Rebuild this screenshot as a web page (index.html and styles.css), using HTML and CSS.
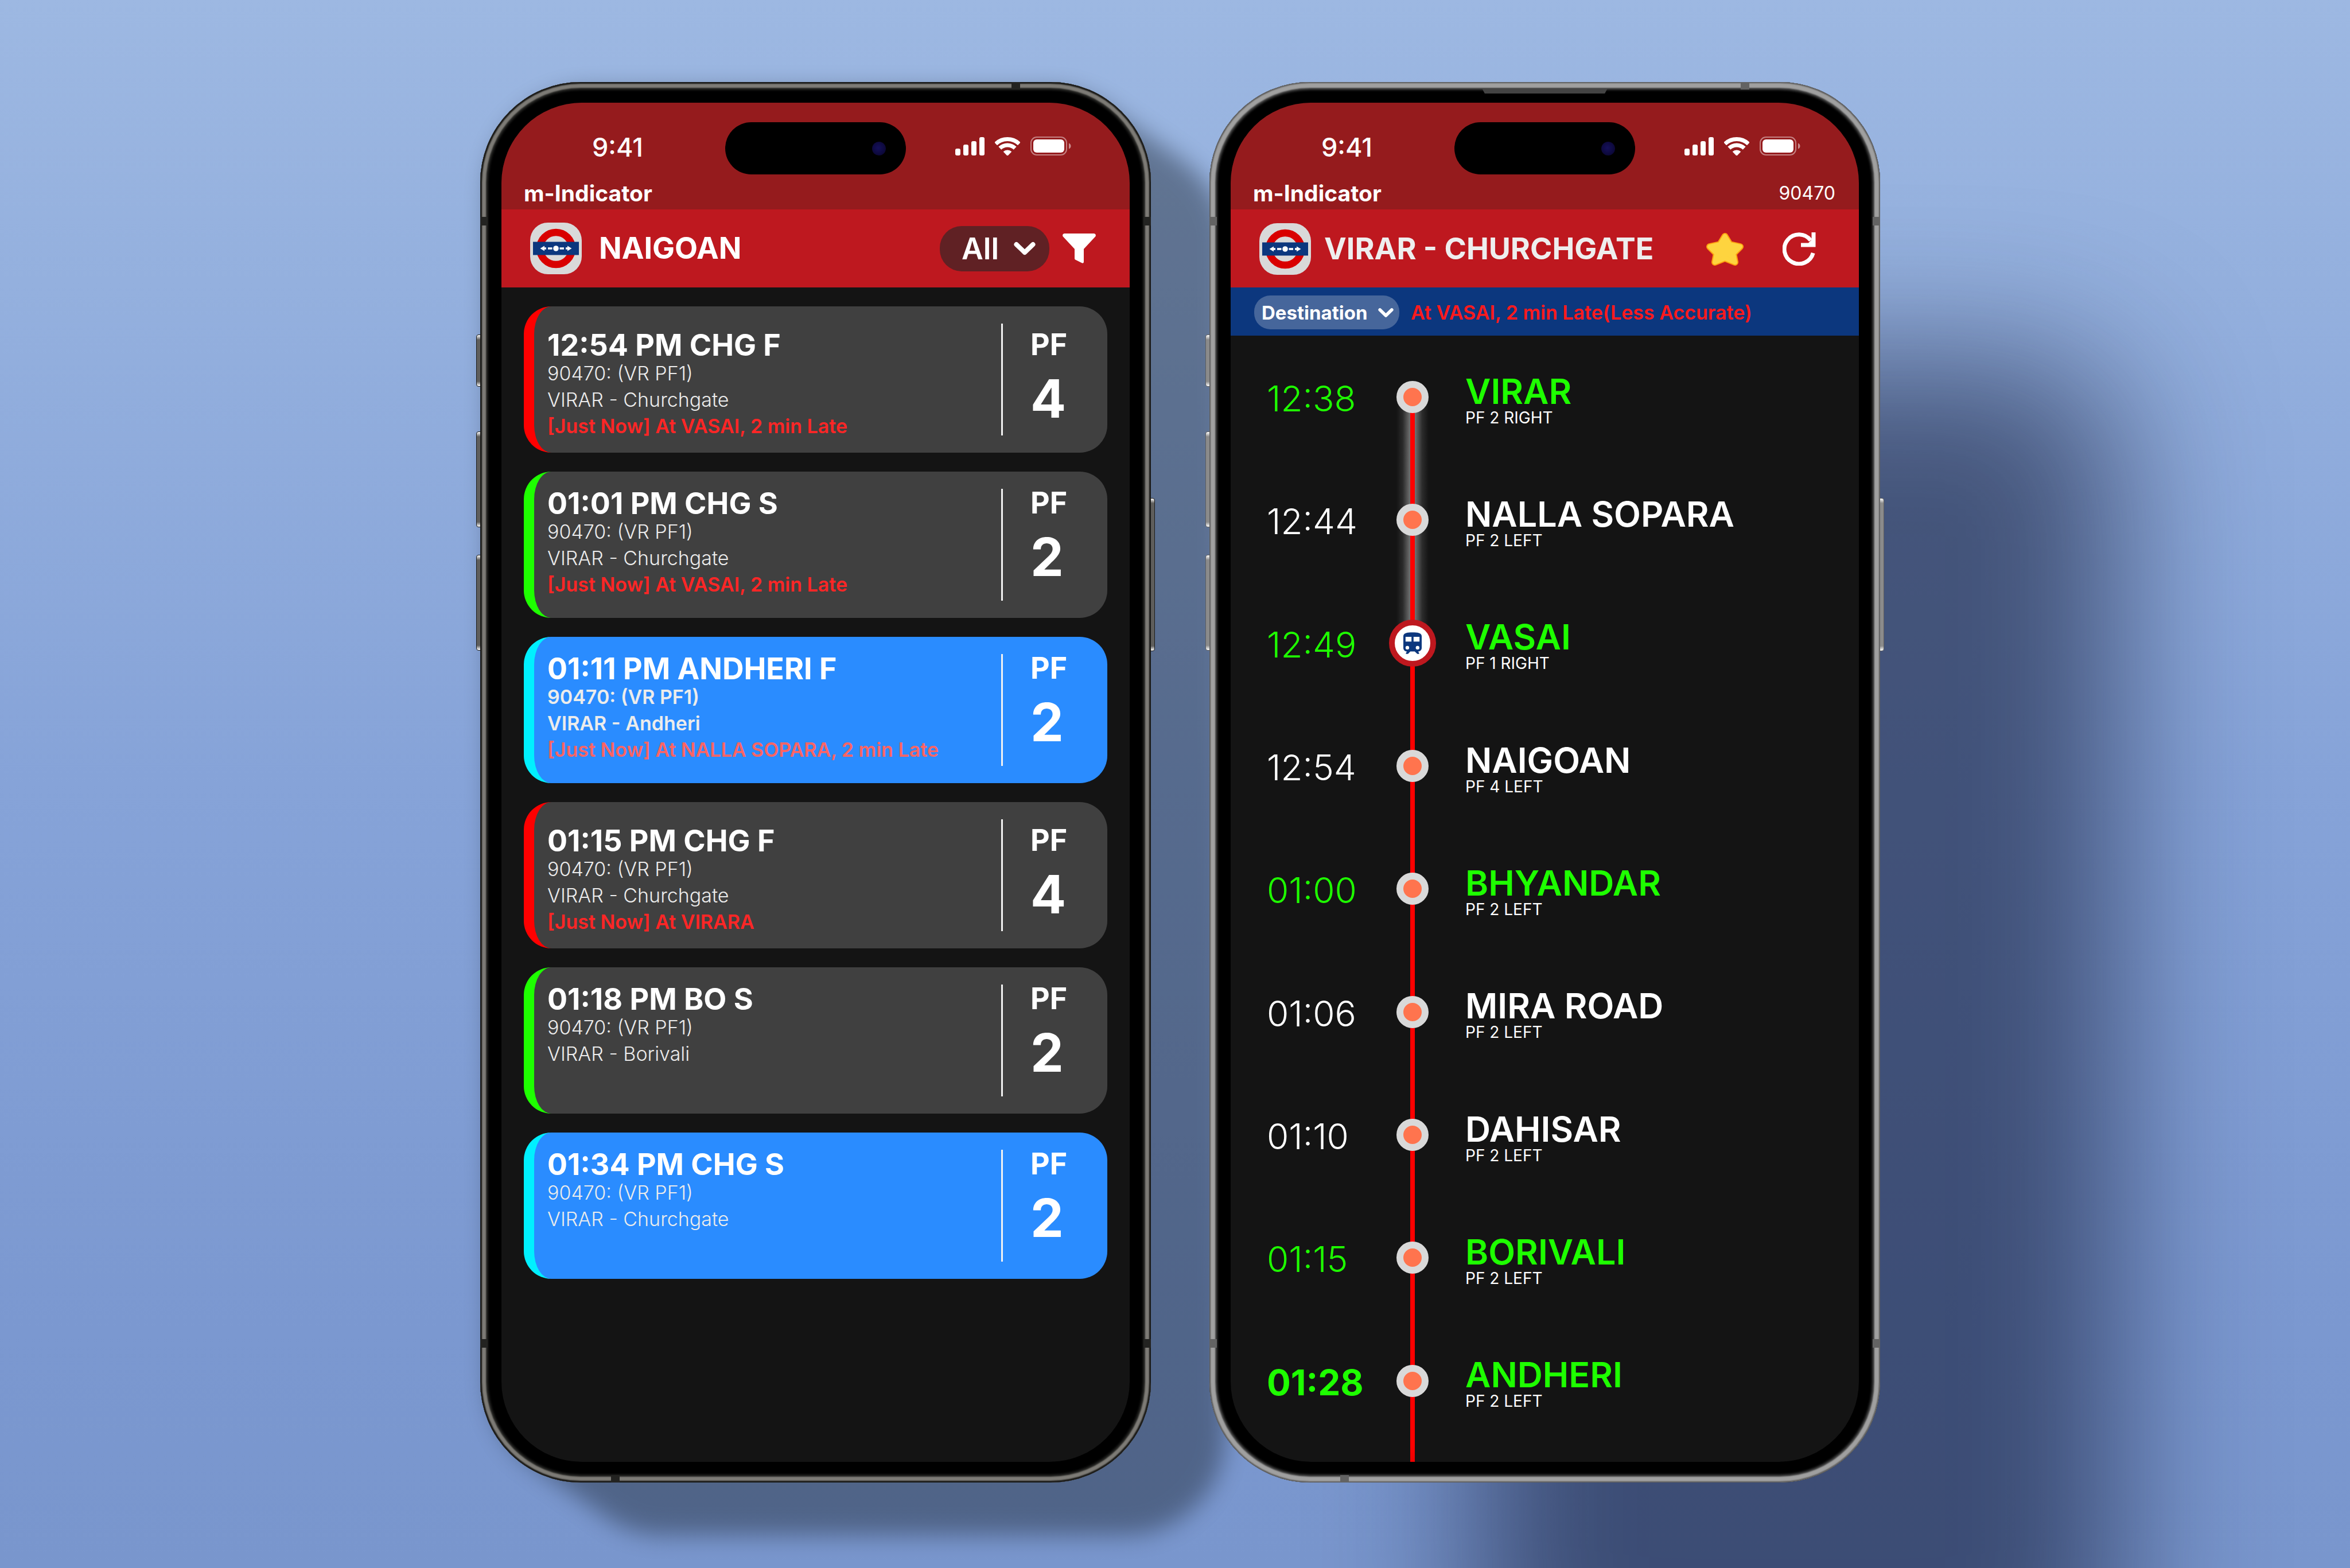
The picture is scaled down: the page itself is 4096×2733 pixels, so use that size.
FILE: index.html
```html
<!DOCTYPE html>
<html lang="en">
<head>
<meta charset="utf-8">
<title>m-Indicator</title>
<link rel="stylesheet" href="styles.css">
</head>
<body>
<svg class="sprite" aria-hidden="true">
  <symbol id="signal" viewBox="0 0 51 32">
    <rect x="0" y="20" width="9" height="12" rx="3"/><rect x="14" y="13" width="9" height="19" rx="3"/><rect x="28" y="7" width="9" height="25" rx="3"/><rect x="42" y="0" width="9" height="32" rx="3"/>
  </symbol>
  <symbol id="wifi" viewBox="0 0 44 32">
    <clipPath id="wedge"><path d="M22 33 -2 8V-4H46V8z"/></clipPath>
    <g clip-path="url(#wedge)"><circle cx="22" cy="33" r="10.5"/><circle cx="22" cy="33" r="19" fill="none" stroke="currentColor" stroke-width="7"/><circle cx="22" cy="33" r="29.5" fill="none" stroke="currentColor" stroke-width="7"/></g>
  </symbol>
  <symbol id="battery" viewBox="0 0 71 33">
    <rect x="1" y="1" width="62" height="31" rx="10" fill="none" stroke="currentColor" stroke-width="2" opacity=".45"/>
    <rect x="5" y="5" width="54" height="23" rx="6"/><path d="M67 11.500q3.500 1.500 3.500 5t-3.500 5z" opacity=".5"/>
  </symbol>
  <symbol id="logo" viewBox="0 0 90 90">
    <rect width="90" height="90" rx="31" fill="#d9d9d9"/>
    <circle cx="45" cy="45" r="28" fill="none" stroke="#d90000" stroke-width="12.500"/>
    <rect x="5" y="33.500" width="80" height="23" fill="#0c377e"/>
    <g fill="#fff"><circle cx="45" cy="45" r="4.800"/><path d="M17.500 45l7.500-4.500V43.300h3v3.400h-3v2.800zM72.500 45l-7.500-4.500V43.300h-3v3.400h3v2.800zM31 43.200h7.500v3.600H31zM51.500 43.200H59v3.600h-7.500z"/></g>
  </symbol>
  <symbol id="chevron" viewBox="0 0 38 24">
    <path d="M4.500 5 19 19 33.500 5" fill="none" stroke="currentColor" stroke-width="8" stroke-linecap="round" stroke-linejoin="round"/>
  </symbol>
  <symbol id="train" viewBox="184 187 142 166">
    <path fill="#0c377e" d="M184 217C184 191 215 187 255 187s71 4 71 30v88c0 17-12 29-28 29l8 12v7H292L272 334H238L220 353H204v-7l8-12c-16 0-28-12-28-29z"/>
    <path fill="#fff" d="M201 221h46v37h-46zM263 221h46v37h-46z"/><circle cx="215" cy="305" r="14" fill="#fff"/><circle cx="294" cy="305" r="14" fill="#fff"/>
  </symbol>
</svg>

<main class="showcase">
  <section class="device device--dark">
    <i class="key key--left key--action"></i><i class="key key--left key--up"></i><i class="key key--left key--down"></i><i class="key key--power"></i>
    <i class="band band--high"></i><i class="band band--low"></i><i class="band band--top"></i><i class="band band--bottom"></i>
    <div class="screen">
      <div class="status">
        <div class="status__row">
          <span class="status__time">9:41</span>
          <span class="island"><i class="island__lens"></i></span>
          <span class="status__icons"><svg width="51" height="32"><use href="#signal"/></svg><svg width="44" height="32"><use href="#wifi"/></svg><svg width="71" height="33"><use href="#battery"/></svg></span>
        </div>
        <div class="status__app"><strong>m-Indicator</strong></div>
      </div>
      <header class="header">
        <svg class="header__logo"><use href="#logo"/></svg>
        <h1 class="header__title">NAIGOAN</h1>
        <label class="picker picker--large"><select aria-label="Line"><option>All</option></select><svg><use href="#chevron"/></svg></label>
        <button class="icon-button" aria-label="Filter"><svg width="58" height="52" viewBox="0 0 58 52"><path fill="#fff" d="M3 0H55Q59 1 57.500 5L37 27V50Q36 53 33 51L22 45.500Q21 45 21 43V27L.5 5Q-1 1 3 0z"/></svg></button>
      </header>
      <ul class="trains">
        <li class="train train--fast">
          <div class="train__info"><h2>12:54 PM CHG F</h2><p>90470: (VR PF1)</p><p>VIRAR - Churchgate</p><p class="train__live">[Just Now] At VASAI, 2 min Late</p></div>
          <div class="train__platform"><span>PF</span><b>4</b></div>
        </li>
        <li class="train train--slow">
          <div class="train__info"><h2>01:01 PM CHG S</h2><p>90470: (VR PF1)</p><p>VIRAR - Churchgate</p><p class="train__live">[Just Now] At VASAI, 2 min Late</p></div>
          <div class="train__platform"><span>PF</span><b>2</b></div>
        </li>
        <li class="train train--ac train--strong">
          <div class="train__info"><h2>01:11 PM ANDHERI F</h2><p>90470: (VR PF1)</p><p>VIRAR - Andheri</p><p class="train__live">[Just Now] At NALLA SOPARA, 2 min Late</p></div>
          <div class="train__platform"><span>PF</span><b>2</b></div>
        </li>
        <li class="train train--fast">
          <div class="train__info"><h2>01:15 PM CHG F</h2><p>90470: (VR PF1)</p><p>VIRAR - Churchgate</p><p class="train__live">[Just Now] At VIRARA</p></div>
          <div class="train__platform"><span>PF</span><b>4</b></div>
        </li>
        <li class="train train--slow">
          <div class="train__info"><h2>01:18 PM BO S</h2><p>90470: (VR PF1)</p><p>VIRAR - Borivali</p></div>
          <div class="train__platform"><span>PF</span><b>2</b></div>
        </li>
        <li class="train train--ac">
          <div class="train__info"><h2>01:34 PM CHG S</h2><p>90470: (VR PF1)</p><p>VIRAR - Churchgate</p></div>
          <div class="train__platform"><span>PF</span><b>2</b></div>
        </li>
      </ul>
    </div>
  </section>

  <section class="device device--light">
    <i class="key key--left key--action"></i><i class="key key--left key--up"></i><i class="key key--left key--down"></i><i class="key key--power"></i>
    <i class="band band--high"></i><i class="band band--low"></i><i class="band band--top"></i><i class="band band--bottom"></i>
    <i class="earpiece"></i>
    <div class="screen">
      <div class="status">
        <div class="status__row">
          <span class="status__time">9:41</span>
          <span class="island"><i class="island__lens"></i></span>
          <span class="status__icons"><svg width="51" height="32"><use href="#signal"/></svg><svg width="44" height="32"><use href="#wifi"/></svg><svg width="71" height="33"><use href="#battery"/></svg></span>
        </div>
        <div class="status__app"><strong>m-Indicator</strong><span>90470</span></div>
      </div>
      <header class="header header--route">
        <svg class="header__logo"><use href="#logo"/></svg>
        <h1 class="header__title">VIRAR - CHURCHGATE</h1>
        <button class="icon-button" aria-label="Favourite"><svg width="65" height="57" viewBox="0 0 65 57"><g stroke-linejoin="round"><path fill="#ff9f0f" stroke="#ff9f0f" stroke-width="12" d="M32.500 6 41 20 59 24 47 36 50 51 32.500 44 15 51 18 36 6 24 24 20z"/><path fill="#fed43f" stroke="#fed43f" stroke-width="8" d="M32.500 6 41 20 59 24 47 36 50 51 32.500 44 15 51 18 36 6 24 24 20z"/></g></svg></button>
        <button class="icon-button" aria-label="Refresh"><svg width="58" height="58" viewBox="0 0 58 58"><path fill="none" stroke="#fff" stroke-width="7" d="M53.200 36A25.500 25.500 0 1 1 49 14"/><path fill="#fff" d="M50.500 0H57.500V25.500H32V18.500H45L50.500 13z"/></svg></button>
      </header>
      <div class="live">
        <label class="picker picker--small"><select aria-label="Stop"><option>Destination</option></select><svg><use href="#chevron"/></svg></label>
        <p class="live__text">At VASAI, 2 min Late(Less Accurate)</p>
      </div>
      <ol class="route">
        <li class="stop stop--green stop--start"><time class="stop__time">12:38</time><span class="stop__rail"><i class="stop__node"></i></span><div class="stop__place"><h2>VIRAR</h2><p>PF 2 RIGHT</p></div></li>
        <li class="stop stop--passed"><time class="stop__time">12:44</time><span class="stop__rail"><i class="stop__node"></i></span><div class="stop__place"><h2>NALLA SOPARA</h2><p>PF 2 LEFT</p></div></li>
        <li class="stop stop--green stop--here"><time class="stop__time">12:49</time><span class="stop__rail"><i class="stop__node stop__node--train"><svg width="32" height="38"><use href="#train"/></svg></i></span><div class="stop__place"><h2>VASAI</h2><p>PF 1 RIGHT</p></div></li>
        <li class="stop"><time class="stop__time">12:54</time><span class="stop__rail"><i class="stop__node"></i></span><div class="stop__place"><h2>NAIGOAN</h2><p>PF 4 LEFT</p></div></li>
        <li class="stop stop--green"><time class="stop__time">01:00</time><span class="stop__rail"><i class="stop__node"></i></span><div class="stop__place"><h2>BHYANDAR</h2><p>PF 2 LEFT</p></div></li>
        <li class="stop"><time class="stop__time">01:06</time><span class="stop__rail"><i class="stop__node"></i></span><div class="stop__place"><h2>MIRA ROAD</h2><p>PF 2 LEFT</p></div></li>
        <li class="stop"><time class="stop__time">01:10</time><span class="stop__rail"><i class="stop__node"></i></span><div class="stop__place"><h2>DAHISAR</h2><p>PF 2 LEFT</p></div></li>
        <li class="stop stop--green"><time class="stop__time">01:15</time><span class="stop__rail"><i class="stop__node"></i></span><div class="stop__place"><h2>BORIVALI</h2><p>PF 2 LEFT</p></div></li>
        <li class="stop stop--green stop--final"><time class="stop__time">01:28</time><span class="stop__rail"><i class="stop__node"></i></span><div class="stop__place"><h2>ANDHERI</h2><p>PF 2 LEFT</p></div></li>
      </ol>
    </div>
  </section>
</main>
</body>
</html>
```
FILE: styles.css
```css
* { box-sizing: border-box; }

body {
  margin: 0;
  font-family: Inter, "Liberation Sans", sans-serif;
  color: #fff;
}

h1, h2, p, ul, ol { margin: 0; padding: 0; list-style: none; }
h1, h2 { font-weight: 600; }
svg { display: block; flex: none; fill: currentColor; }
button, select { font: inherit; color: inherit; border: 0; background: none; padding: 0; margin: 0; }
.sprite { position: absolute; width: 0; height: 0; }

.showcase {
  display: grid;
  grid-template-columns: 1fr 1fr;
  gap: 102px;
  align-items: start;
  min-height: 100vh;
  padding: 143px 819px 0 837px;
  overflow: hidden;
  background: linear-gradient(#9db8e2, #94b0de 18%, #86a3d8 50%, #7b98d0 85%, #7996cd);
}

/* Phone body */
.device {
  position: relative;
  z-index: 1;
  min-width: 0;
  aspect-ratio: 1169 / 2441;
  padding: 36px 37px;
  border-radius: 175px;
  background: #000;
}
.device--dark {
  --band: #232321;
  --key: #5f5e5c;
  --edge: #1b1b19;
  z-index: 0;
}
.device--light {
  --band: #636363;
  --key: #8b8b8b;
  --edge: #5e5e5e;
  box-shadow: 440px 460px 310px -25px rgba(20, 28, 58, .6);
}
.device--dark::before {
  content: "";
  position: absolute;
  inset: 14px 0 0 14px;
  z-index: -2;
  border-radius: inherit;
  color: #1e2835;
  background: currentColor;
  box-shadow: 16px 11px, 32px 23px, 49px 34px, 65px 46px, 81px 57px, 98px 69px, 114px 80px, 130px 92px;
  filter: blur(20px);
  opacity: .45;
}
.device::after {
  content: "";
  position: absolute;
  inset: 0;
  z-index: -1;
  border-radius: inherit;
  background: #000;
}
.device--dark::after {
  box-shadow: inset 0 0 2px 3px #191917, inset 0 0 2px 10px #7d7b76, inset 0 0 4px 13px #32322f;
}
.device--light::after {
  box-shadow: inset 0 0 2px 2px #5c5c5c, inset 0 0 2px 10px #a0a0a0, inset 0 0 4px 13px #555;
}

.key {
  position: absolute;
  z-index: -2;
  width: 8px;
  border: 1px solid var(--edge);
  background: linear-gradient(#fff, var(--key) 8px, var(--key) calc(100% - 8px), #fff);
}
.key--left { left: -7px; border-radius: 4px 0 0 4px; }
.key--action { top: 440px; height: 91px; }
.key--up { top: 609px; height: 167px; }
.key--down { top: 824px; height: 167px; }
.key--power { right: -7px; top: 725px; height: 267px; border-radius: 0 4px 4px 0; }

.band { position: absolute; background: var(--band); }
.band--high, .band--low {
  left: 0;
  right: 0;
  height: 15px;
  background: linear-gradient(90deg, var(--band) 13px, transparent 13px calc(100% - 13px), var(--band) calc(100% - 13px));
}
.band--high { top: 235px; }
.band--low { bottom: 235px; }
.band--top, .band--bottom { width: 15px; height: 13px; }
.band--top { right: 228px; top: 0; }
.band--bottom { left: 228px; bottom: 0; }
.earpiece {
  position: absolute;
  top: 12px;
  left: 50%;
  width: 218px;
  height: 8px;
  margin-left: -109px;
  background: #444;
  clip-path: polygon(0 0, 100% 0, 98% 100%, 2% 100%);
}

.screen {
  display: flex;
  flex-direction: column;
  height: 100%;
  border-radius: 140px;
  overflow: hidden;
  background: #141414;
}

/* Status bar */
.status { height: 186px; padding-top: 34px; background: #951b1d; flex: none; }
.status__row {
  display: grid;
  grid-template-columns: 1fr 315px 1fr;
  align-items: center;
  height: 91px;
}
.status__time {
  padding: 0 0 4px 15px;
  text-align: center;
  font-size: 45px;
  line-height: 48px;
  font-weight: 500;
}
.status__icons {
  display: flex;
  justify-content: center;
  align-items: center;
  gap: 18px;
  padding: 0 16px 8px 0;
}
.island {
  display: flex;
  justify-content: flex-end;
  align-items: center;
  height: 91px;
  padding-right: 35px;
  border-radius: 46px;
  background: #000;
}
.island__lens {
  width: 24px;
  height: 24px;
  border-radius: 50%;
  background: radial-gradient(circle at 45% 45%, #15105a, #0b0735 75%);
}
.status__app {
  display: flex;
  justify-content: space-between;
  align-items: center;
  height: 61px;
  padding: 4px 41px 0 39px;
  line-height: 48px;
}
.status__app strong { font-size: 39px; font-weight: 700; }
.status__app span { font-size: 32px; }

/* Title bar */
.header {
  display: flex;
  align-items: center;
  flex: none;
  gap: 23px;
  height: 136px;
  padding: 0 59px 0 50px;
  background: #be181f;
}
.header__logo { width: 90px; height: 90px; }
.header__title { flex: 1; padding-left: 7px; font-size: 52px; line-height: 64px; font-weight: 700; white-space: nowrap; }
.header--route { gap: 68px; padding: 2px 75px 0 50px; }
.header--route .header__title { margin-left: -45px; padding-left: 0; color: #eee; }
.icon-button { display: block; }

.picker { display: grid; align-items: center; }
.picker select, .picker svg { grid-area: 1 / 1; }
.picker select { appearance: none; width: 100%; height: 100%; font-weight: 600; }
.picker svg { justify-self: end; pointer-events: none; }
.picker--large { width: 191px; height: 79px; border-radius: 38px; background: #602124; font-size: 52px; }
.picker--large select { padding-left: 38px; }
.picker--large svg { width: 38px; height: 24px; margin-right: 24px; }
.picker--small { width: 253px; height: 59px; border-radius: 28px; background: #46669b; font-size: 33px; }
.picker--small select { padding-left: 13px; font-weight: 700; }
.picker--small svg { width: 27px; height: 18px; margin-right: 10px; }

/* Departures */
.trains { display: grid; gap: 33px; padding: 33px 39px; }
.train {
  display: flex;
  height: 255px;
  border-left: 18px solid #1eff00;
  border-radius: 48px;
  background: #404040;
}
.train--fast { border-left-color: #f00; }
.train--ac { border-left-color: #00f0ff; background: #2a8cff; }
.train__info { flex: 1; padding: 30px 0 0 23px; font-size: 34px; line-height: 46px; }
.train__info h2 { font-size: 52px; line-height: 52px; font-weight: 700; }
.train__info p { color: #ececec; font-weight: 300; white-space: nowrap; }
.train__info .train__live { color: #ff2626; font-weight: 600; }
.train--ac .train__live.train__live { color: #ff6464; }
.train--strong .train__info p { font-weight: 600; }
.train--fast .train__info { padding-top: 42px; }
.train__platform {
  position: relative;
  display: flex;
  flex-direction: column;
  width: 185px;
  padding: 27px 0 0 51px;
}
.train--fast .train__platform { padding-top: 39px; }
.train__platform::before {
  content: "";
  position: absolute;
  left: 0;
  top: 30px;
  bottom: 30px;
  width: 3px;
  background: #f2f2f2;
}
.train__platform span { font-size: 52px; line-height: 56px; font-weight: 700; }
.train__platform b { font-size: 92px; line-height: 132px; font-weight: 700; }

/* Running status */
.live {
  display: flex;
  align-items: center;
  flex: none;
  gap: 20px;
  height: 84px;
  padding: 3px 0 0 41px;
  background: #0c377e;
}
.live__text { color: #ff1a1d; font-size: 34px; line-height: 46px; font-weight: 600; white-space: nowrap; }

/* Route */
.route {
  display: flex;
  flex-direction: column;
  flex: 1;
  padding-bottom: 34px;
  background: linear-gradient(#f00 93%, #a00) no-repeat 313px 107px / 8px 100%;
}
.stop {
  display: grid;
  grid-template-columns: 213px 82px 1fr;
  align-items: center;
  flex: 1;
  padding-left: 63px;
}
.stop__time { padding-top: 6px; font-size: 62px; line-height: 72px; font-weight: 300; }
.stop__rail {
  --glow: linear-gradient(90deg, transparent, rgba(255, 255, 255, .1) 20%, rgba(255, 255, 255, .4) 43%, transparent 43% 57%, rgba(255, 255, 255, .4) 57%, rgba(255, 255, 255, .1) 80%, transparent);
  align-self: stretch;
  display: grid;
  place-items: center;
}
.stop--start .stop__rail { background: var(--glow) no-repeat 50% 100% / 56px 50%; }
.stop--passed .stop__rail { background: var(--glow) no-repeat 50% 0 / 56px 100%; }
.stop--here .stop__rail { background: var(--glow) no-repeat 50% 0 / 56px 50%; }
.stop__node {
  display: grid;
  place-items: center;
  width: 56px;
  height: 56px;
  border: 12px solid #d9d9d9;
  border-radius: 50%;
  background: #ff744e;
}
.stop__node--train { width: 82px; height: 82px; border: 10px solid #be181f; background: #fff; }
.stop__place { padding: 9px 0 0 51px; }
.stop__place h2 { font-size: 61px; line-height: 62px; white-space: nowrap; }
.stop__place p { font-size: 28px; line-height: 30px; }
.stop--green .stop__time, .stop--green h2 { color: #1eff00; }
.stop--final .stop__time { font-weight: 700; }
```
